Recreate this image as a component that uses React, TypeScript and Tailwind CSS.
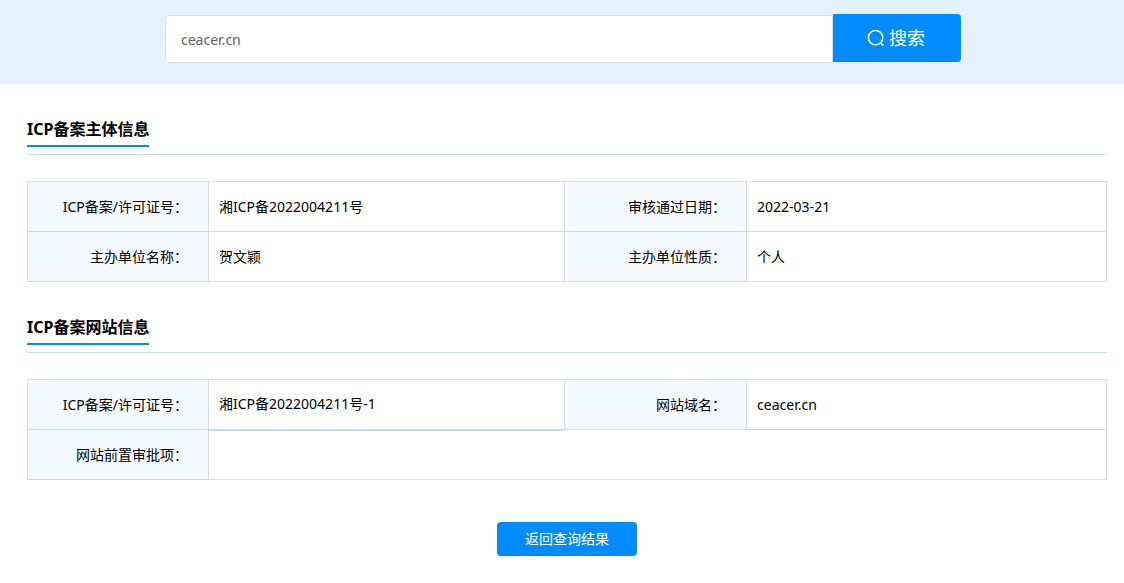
import { useState } from "react";
import type { ReactNode } from "react";

function SearchIcon() {
  return (
    <svg width="18" height="18" viewBox="0 0 18 18" fill="none" stroke="currentColor" strokeWidth="1.5" aria-hidden="true">
      <circle cx="8.6" cy="8.6" r="7.2" />
      <path d="M13.4 13.6L16.4 16.6" />
    </svg>
  );
}

function Section({ title, children }: { title: string; children: ReactNode }) {
  return (
    <section className="mb-[27px]">
      <div className="flex border-b border-[#c8ddec] pb-[7px] mb-[26px]">
        <h2 className="h-9 leading-9 text-base font-bold border-b-2 border-[#008cff]">{title}</h2>
      </div>
      <table className="w-full table-fixed border-collapse border border-[#dcdcdc]">
        <colgroup>
          <col className="w-[181px]" />
          <col className="w-[33%]" />
          <col className="w-[182px]" />
          <col />
        </colgroup>
        <tbody>{children}</tbody>
      </table>
    </section>
  );
}

function Label({ children }: { children: ReactNode }) {
  return (
    <th scope="row" className="h-[50px] border-x border-x-[#dcdcdc] border-b border-b-[#c8ddec] bg-[#f4faff] pr-5 text-right font-normal">
      {children}
    </th>
  );
}

function App() {
  const [keyword, setKeyword] = useState("ceacer.cn");

  return (
    <div className="bg-white text-sm text-black font-['Noto_Sans','Noto_Sans_CJK_SC',sans-serif]">
      <header className="bg-[#e4f2ff] pt-3.5 pr-[163px] pb-[21px] pl-[165px]">
        <form className="flex items-start" onSubmit={(e) => e.preventDefault()}>
          <input
            type="text"
            aria-label="搜索"
            value={keyword}
            onChange={(e) => setKeyword(e.target.value)}
            className="mt-px h-12 min-w-0 flex-1 rounded-l border border-[#dcdcdc] bg-white px-[15px] text-sm text-[#606266] outline-none"
          />
          <button type="submit" className="flex h-12 w-32 cursor-pointer items-center justify-center gap-1 rounded-r bg-[#008cff] pr-0.5 text-lg text-white">
            <SearchIcon />
            搜索
          </button>
        </form>
      </header>

      <main className="pt-[27px] pr-[17px] pl-[27px]">
        <Section title="ICP备案主体信息">
          <tr>
            <Label>ICP备案/许可证号：</Label>
            <td className="border-b border-[#c8ddec] px-2.5">湘ICP备2022004211号</td>
            <Label>审核通过日期：</Label>
            <td className="border-b border-[#c8ddec] px-2.5">2022-03-21</td>
          </tr>
          <tr>
            <Label>主办单位名称：</Label>
            <td className="border-b border-[#dcdcdc] px-2.5">贺文颖</td>
            <Label>主办单位性质：</Label>
            <td className="border-b border-[#dcdcdc] px-2.5">个人</td>
          </tr>
        </Section>

        <Section title="ICP备案网站信息">
          <tr>
            <Label>ICP备案/许可证号：</Label>
            <td className="border-b-2 border-[#c8ddec] px-2.5">湘ICP备2022004211号-1</td>
            <Label>网站域名：</Label>
            <td className="border-b border-[#c8ddec] px-2.5">ceacer.cn</td>
          </tr>
          <tr>
            <Label>网站前置审批项：</Label>
            <td colSpan={3} className="border-b border-[#dcdcdc] px-2.5" />
          </tr>
        </Section>

        <div className="flex justify-center pt-[15px] pb-6">
          <button type="button" className="h-[34px] w-[140px] cursor-pointer rounded bg-[#008cff] text-white">
            返回查询结果
          </button>
        </div>
      </main>
    </div>
  );
}

export default App;
